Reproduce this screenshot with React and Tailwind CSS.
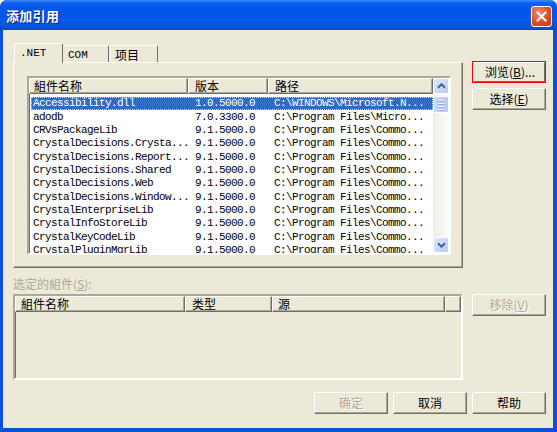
import React from 'react';

const rows = [
    ['Accessibility.dll', '1.0.5000.0', 'C:\\WINDOWS\\Microsoft.N...'],
    ['adodb', '7.0.3300.0', 'C:\\Program Files\\Micro...'],
    ['CRVsPackageLib', '9.1.5000.0', 'C:\\Program Files\\Commo...'],
    ['CrystalDecisions.Crysta...', '9.1.5000.0', 'C:\\Program Files\\Commo...'],
    ['CrystalDecisions.Report...', '9.1.5000.0', 'C:\\Program Files\\Commo...'],
    ['CrystalDecisions.Shared', '9.1.5000.0', 'C:\\Program Files\\Commo...'],
    ['CrystalDecisions.Web', '9.1.5000.0', 'C:\\Program Files\\Commo...'],
    ['CrystalDecisions.Window...', '9.1.5000.0', 'C:\\Program Files\\Commo...'],
    ['CrystalEnterpriseLib', '9.1.5000.0', 'C:\\Program Files\\Commo...'],
    ['CrystalInfoStoreLib', '9.1.5000.0', 'C:\\Program Files\\Commo...'],
    ['CrystalKeyCodeLib', '9.1.5000.0', 'C:\\Program Files\\Commo...'],
    ['CrystalPluginMgrLib', '9.1.5000.0', 'C:\\Program Files\\Commo...'],
];

// raised 3d button, classic look
const Btn = ({ children, disabled, className = '' }) => (
    <div
        className={`flex h-[22px] w-[74px] shrink-0 items-center justify-center border border-t-white border-l-white border-r-[#716f64] border-b-[#716f64] bg-[#ece9d8] text-[12px] leading-none shadow-[inset_-1px_-1px_0_#aca899] ${disabled ? 'text-[#aca899] [text-shadow:1px_1px_0_#fff]' : 'text-black'} ${className}`}
    >
        {children}
    </div>
);

const HeadCell = ({ children, className = '' }) => (
    <div
        className={`flex h-full shrink-0 items-center border-t border-l border-t-white border-l-white border-r border-b border-r-[#716f64] border-b-[#716f64] bg-[#ece9d8] text-[12px] leading-none text-black shadow-[inset_-1px_-1px_0_#aca899] ${className}`}
    >
        {children}
    </div>
);

const ScrollBtn = ({ down }) => (
    <div className="flex h-[16px] w-[16px] shrink-0 items-center justify-center rounded-[2px] border border-white bg-[linear-gradient(135deg,#dde8fe,#b6cbf7)]">
        <svg width="9" height="6" viewBox="0 0 9 6">
            <path
                d={down ? 'M1 1.2 L4.5 4.7 L8 1.2' : 'M1 4.8 L4.5 1.3 L8 4.8'}
                stroke="#4d6185"
                strokeWidth="2"
                fill="none"
            />
        </svg>
    </div>
);

const mono = "[font-family:'Liberation_Mono','Noto_Sans_CJK_SC',monospace]";

const App = () => {
    return (
        <div className="min-h-screen bg-white">
            <div className="flex h-[432px] w-[557px] flex-col overflow-hidden rounded-t-[7px] bg-[#0a4fd8] [font-family:'Noto_Sans_CJK_SC',sans-serif]">
                {/* title bar */}
                <div className="flex h-[30px] shrink-0 items-start justify-between bg-[linear-gradient(to_bottom,#3d8ef8_0px,#0d60f0_3px,#0055e6_10px,#0259ec_20px,#0a52dc_27px,#0846c8_30px)] pl-[6px] pr-[5px]">
                    <span className="mt-[7px] text-[13px] font-bold leading-[17px] tracking-[0.3px] text-white [text-shadow:1px_1px_0_#0a1e8c]">
                        添加引用
                    </span>
                    <div className="mt-[6px] flex h-[21px] w-[21px] items-center justify-center rounded-[3px] border border-white bg-[radial-gradient(circle_at_35%_30%,#f08a6a,#e0471c_60%,#c93a12)]">
                        <svg width="11" height="11" viewBox="0 0 11 11">
                            <path d="M1.5 1.5 L9.5 9.5 M9.5 1.5 L1.5 9.5" stroke="white" strokeWidth="2.2" strokeLinecap="square" />
                        </svg>
                    </div>
                </div>

                {/* client */}
                <div className="flex flex-1 pl-[3px] pr-[4px] pb-[4px]">
                    <div className="flex flex-1 flex-col bg-[#ece9d8] pl-[10px] pr-[7px] pt-[13px]">
                        <div className="flex">
                            {/* tab control */}
                            <div className="flex w-[450px] flex-col">
                                <div className="flex h-[19px] items-end pl-[1px]">
                                    <div className={`relative z-10 -mb-[1px] h-[20px] w-[49px] rounded-t-[2px] border-l border-t border-r border-l-white border-t-white border-r-[#716f64] bg-[#ece9d8] pl-[5px] pt-[3px] text-[11px] leading-[12px] text-black ${mono}`}>
                                        .NET
                                    </div>
                                    <div className={`h-[17px] w-[46px] rounded-t-[2px] border-t border-r border-t-white border-r-[#716f64] pl-[5px] pt-[3px] text-[11px] leading-[12px] text-black ${mono}`}>
                                        COM
                                    </div>
                                    <div className="ml-[1px] h-[17px] w-[48px] rounded-t-[2px] border-l border-t border-r border-l-white border-t-white border-r-[#716f64] pl-[4px] pt-[2px] text-[12px] leading-[13px] text-black">
                                        项目
                                    </div>
                                </div>
                                <div className="h-[206px] border border-t-white border-l-white border-r-[#716f64] border-b-[#716f64] pl-[13px] pt-[13px] shadow-[inset_-1px_-1px_0_#aca899]">
                                    {/* list view */}
                                    <div className="flex h-[179px] w-[424px] border-2 border-t-[#aca899] border-l-[#aca899] border-r-white border-b-white bg-white shadow-[inset_1px_1px_0_#716f64]">
                                        <div className="flex w-[404px] flex-col overflow-hidden">
                                            <div className="flex h-[16px] shrink-0">
                                                <HeadCell className="w-[159px] pl-[4px]">組件名称</HeadCell>
                                                <HeadCell className="w-[80px] pl-[6px]">版本</HeadCell>
                                                <HeadCell className="w-[165px] pl-[6px]">路径</HeadCell>
                                            </div>
                                            <div className="flex-1 overflow-hidden pt-[3px]">
                                                {rows.map((r, i) => (
                                                    <div
                                                        key={i}
                                                        className={`ml-[2px] flex h-[13.36px] items-center whitespace-nowrap text-[11px] leading-none tracking-[-0.6px] ${mono} ${i === 0 ? 'bg-[#316ac5] text-white outline-1 -outline-offset-1 outline-dotted outline-[#f3d98a]' : 'text-black'}`}
                                                    >
                                                        <span className="w-[157px] shrink-0 pl-[2px]">{r[0]}</span>
                                                        <span className="w-[80px] shrink-0 pl-[7px]">{r[1]}</span>
                                                        <span className="flex-1 pl-[6px]">{r[2]}</span>
                                                    </div>
                                                ))}
                                            </div>
                                        </div>
                                        {/* scrollbar */}
                                        <div className="flex w-[16px] flex-col bg-[linear-gradient(to_right,#eeede5,#fdfdfa)]">
                                            <ScrollBtn />
                                            <div className="mt-[2px] flex h-[17px] flex-col items-center justify-center gap-[1px] rounded-[2px] border border-white bg-[linear-gradient(to_right,#c9d8fc,#b8cbf8)]">
                                                <div className="h-[1px] w-[6px] bg-[#eef4fe] shadow-[0_1px_0_#8cb0f8]" />
                                                <div className="mt-[1px] h-[1px] w-[6px] bg-[#eef4fe] shadow-[0_1px_0_#8cb0f8]" />
                                                <div className="mt-[1px] h-[1px] w-[6px] bg-[#eef4fe] shadow-[0_1px_0_#8cb0f8]" />
                                                <div className="mt-[1px] h-[1px] w-[6px] bg-[#eef4fe] shadow-[0_1px_0_#8cb0f8]" />
                                            </div>
                                            <div className="flex-1" />
                                            <ScrollBtn down />
                                        </div>
                                    </div>
                                </div>
                            </div>

                            {/* right buttons */}
                            <div className="ml-[9px] mt-[18px] flex flex-col gap-[5px]">
                                <div className="h-[22px] w-[74px] border border-[#ff0000]">
                                    <div className="flex h-full w-full items-center justify-center border border-t-white border-l-white border-r-[#716f64] border-b-[#716f64] pl-[2px] text-[12px] leading-none text-black">
                                        浏览(<span className="underline">B</span>)...
                                    </div>
                                </div>
                                <Btn>
                                    选择(<span className="underline">E</span>)
                                </Btn>
                            </div>
                        </div>

                        {/* selected components */}
                        <div className="mt-[8px] flex h-[16px] items-center text-[12px] leading-none text-[#aca899]">
                            选定的組件(<span className="underline">S</span>):
                        </div>
                        <div className="mt-[2px] flex">
                            <div className="h-[86px] w-[450px] border-2 border-t-[#aca899] border-l-[#aca899] border-r-white border-b-white shadow-[inset_1px_1px_0_#716f64]">
                                <div className="flex h-[16px]">
                                    <HeadCell className="w-[170px] pl-[5px]">組件名称</HeadCell>
                                    <HeadCell className="w-[87px] pl-[6px]">类型</HeadCell>
                                    <HeadCell className="w-[173px] pl-[5px]">源</HeadCell>
                                    <HeadCell className="w-[16px]" />
                                </div>
                            </div>
                            <Btn disabled className="ml-[9px]">
                                移除(<span className="underline">V</span>)
                            </Btn>
                        </div>

                        {/* bottom buttons */}
                        <div className="mt-[12px] flex justify-end gap-[5px]">
                            <Btn disabled>确定</Btn>
                            <Btn>取消</Btn>
                            <Btn>帮助</Btn>
                        </div>
                    </div>
                </div>
            </div>
        </div>
    );
};

export default App;
